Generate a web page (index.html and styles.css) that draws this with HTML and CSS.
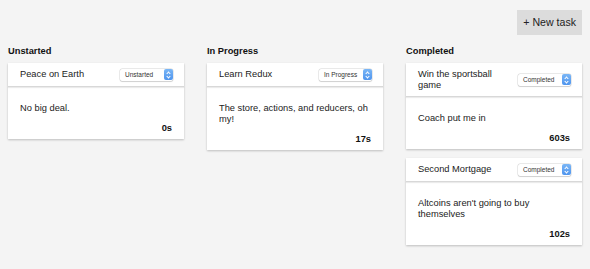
FILE: index.html
```html
<!DOCTYPE html>
<html lang="en">

<head>
    <meta charset="UTF-8">
    <title>Task Board</title>
    <link rel="stylesheet" href="styles.css">
</head>

<body>
    <div class="toolbar">
        <button class="btnNew">+ New task</button>
    </div>

    <div class="board">
        <!-- Unstarted -->
        <div class="column">
            <div class="colTitle">Unstarted</div>
            <div class="task">
                <div class="taskHead">
                    <div class="taskName">Peace on Earth</div>
                    <div class="statusSelect"><span>Unstarted</span><i class="stepper"></i></div>
                </div>
                <div class="taskBody">
                    <div class="taskDesc">No big deal.</div>
                    <div class="taskTime">0s</div>
                </div>
            </div>
        </div>

        <!-- In Progress -->
        <div class="column">
            <div class="colTitle">In Progress</div>
            <div class="task">
                <div class="taskHead">
                    <div class="taskName">Learn Redux</div>
                    <div class="statusSelect"><span>In Progress</span><i class="stepper"></i></div>
                </div>
                <div class="taskBody">
                    <div class="taskDesc">The store, actions, and reducers, oh my!</div>
                    <div class="taskTime">17s</div>
                </div>
            </div>
        </div>

        <!-- Completed -->
        <div class="column">
            <div class="colTitle">Completed</div>
            <div class="task">
                <div class="taskHead">
                    <div class="taskName">Win the sportsball game</div>
                    <div class="statusSelect"><span>Completed</span><i class="stepper"></i></div>
                </div>
                <div class="taskBody">
                    <div class="taskDesc">Coach put me in</div>
                    <div class="taskTime">603s</div>
                </div>
            </div>
            <div class="task">
                <div class="taskHead">
                    <div class="taskName">Second Mortgage</div>
                    <div class="statusSelect"><span>Completed</span><i class="stepper"></i></div>
                </div>
                <div class="taskBody">
                    <div class="taskDesc">Altcoins aren't going to buy themselves</div>
                    <div class="taskTime">102s</div>
                </div>
            </div>
        </div>
    </div>
</body>

</html>
```

FILE: styles.css
```css
body {
    font-family: "Liberation Sans", Arial, sans-serif;
    font-size: 9.3px;
    color: #222;
    margin: 0;
    padding: 10px 8px;
    background-color: #f4f4f4;
}

.toolbar {
    display: flex;
    justify-content: flex-end;
}

.btnNew {
    font-family: inherit;
    font-size: 10.6px;
    line-height: 13px;
    height: 25px;
    padding: 0 6px;
    border: none;
    background-color: #dcdcdc;
    color: #222;
}

.board {
    display: grid;
    grid-template-columns: repeat(3, 1fr);
    gap: 23px;
    margin-top: 11px;
}

.column {
    display: flex;
    flex-direction: column;
    gap: 9px;
}

.colTitle {
    font-weight: bold;
    color: #111;
    line-height: 11px;
    margin-bottom: -3px;
}

.task {
    background-color: #fff;
    box-shadow: 0 1px 2px rgba(0, 0, 0, 0.22);
}

.taskHead {
    display: flex;
    align-items: center;
    gap: 8px;
    padding: 5.5px 11px 5.5px 12px;
    line-height: 11px;
    border-bottom: 1px solid #d8d8d8;
    box-shadow: 0 1px 1px rgba(0, 0, 0, 0.08);
}

.taskName {
    flex: 1;
}

/* fake mac-style select */
.statusSelect {
    display: flex;
    align-items: center;
    justify-content: space-between;
    width: 53px;
    height: 12px;
    box-sizing: border-box;
    padding-left: 5px;
    background: #fff;
    border-radius: 2px;
    box-shadow: 0 0 0 0.5px rgba(0, 0, 0, 0.15), 0 0.5px 1px rgba(0, 0, 0, 0.12);
    font-size: 6.5px;
    line-height: 12px;
    color: #333;
}

.stepper {
    position: relative;
    width: 9px;
    height: 11px;
    margin-right: 0.5px;
    border-radius: 2px;
    background: linear-gradient(#7ab6f6, #4f95ee);
}

.stepper::before,
.stepper::after {
    content: "";
    position: absolute;
    left: 3px;
    width: 2px;
    height: 2px;
    border-left: 1px solid #fff;
    border-top: 1px solid #fff;
}

.stepper::before {
    top: 2.5px;
    transform: rotate(45deg);
}

.stepper::after {
    bottom: 2.5px;
    transform: rotate(225deg);
}

.taskBody {
    padding: 16px 12px 5px;
    line-height: 11px;
}

.taskDesc {
    margin-bottom: 9px;
}

.taskTime {
    text-align: right;
    font-weight: bold;
    color: #111;
}
```
